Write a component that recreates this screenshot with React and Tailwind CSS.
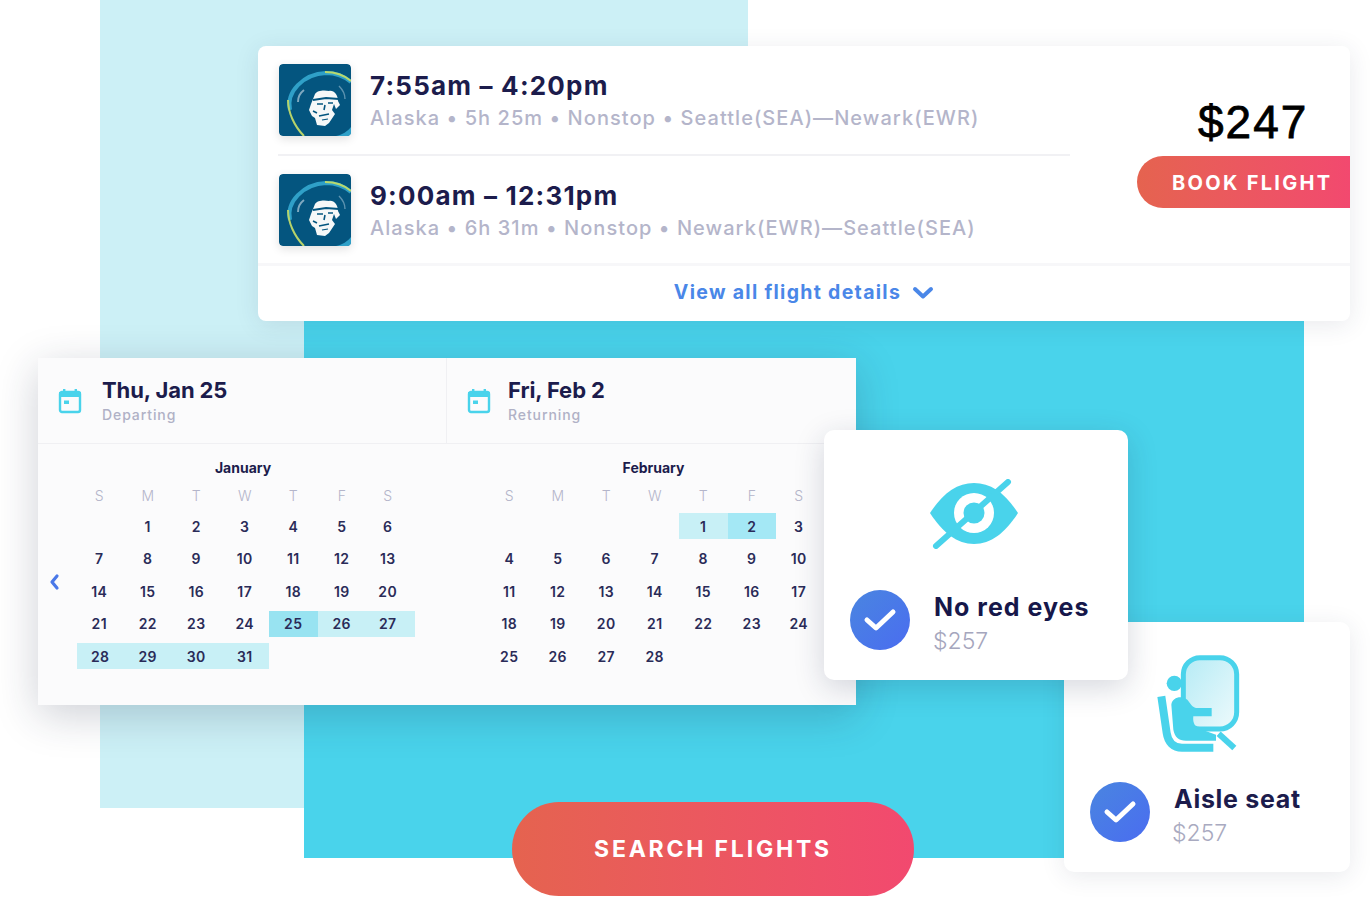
import React from "react";

const F = { fontFamily: '"Inter", "Open Sans", sans-serif' };

function AlaskaLogo() {
  return (
    <svg width="72" height="72" viewBox="0 0 72 72" className="block rounded-[4px] shadow-[0_3px_10px_rgba(0,0,0,0.12)] shrink-0">
      <rect width="72" height="72" rx="4" fill="#04557f" />
      <g className="blur-[0.5px]">
        <path d="M11 46 C7 28 24 10 47 9 C56 9 65 12 72 18" fill="none" stroke="#2fa0c8" strokeWidth="4" />
        <path d="M46 8 C56 8 65 11 72 17" fill="none" stroke="#b9d96c" strokeWidth="2" />
        <path d="M9 36 C9 48 15 62 25 72" fill="none" stroke="#b7d36a" strokeWidth="2" />
        <path d="M19 38 C19 33 21 29 25 26" fill="none" stroke="#7fa9c0" strokeWidth="2" />
        <path d="M60 22 C64 26 66 30 66 35" fill="none" stroke="#5d93b0" strokeWidth="1.4" />
        <path d="M57 72 C63 71 69 67 72 63 L72 72Z" fill="#2fa0c8" />
        <path d="M36 30 C38 26 46 26 50 27 C55 26 59 31 59 37 L61 41 L57 45 L55 40 L53 46 L56 50 L50 59 L46 62 L38 61 L36 54 L33 52 L30 46 L32 40 Z" fill="#f6f8f8" />
        <path d="M34 36 L47 34 L60 35" stroke="#04557f" strokeWidth="1.8" fill="none" />
        <path d="M38 40 L44 40 M49 39 L54 39 M46 41 L45 46 M40 52 L50 50 M34 47 L38 49" stroke="#04557f" strokeWidth="1.6" fill="none" />
        <path d="M43 56 L49 55" stroke="#04557f" strokeWidth="1.2" fill="none" />
      </g>
    </svg>
  );
}

function FlightRow({ time, sub }) {
  return (
    <div className="flex items-center gap-[19px] h-[72px]">
      <AlaskaLogo />
      <div className="flex flex-col -mt-[1px]">
        <div className="text-[26px] leading-[34px] font-bold text-[#1c1c4c] tracking-[1.2px] whitespace-nowrap">{time}</div>
        <div className="text-[20px] leading-[26px] mt-[2px] text-[#b4b5ca] tracking-[1.05px] font-medium whitespace-nowrap">{sub}</div>
      </div>
    </div>
  );
}

function CalIcon() {
  return (
    <svg width="24" height="26" viewBox="0 0 24 26" className="block shrink-0">
      <rect x="2" y="4" width="20" height="20" rx="2" fill="none" stroke="#49d3eb" strokeWidth="2.4" />
      <rect x="1" y="4" width="22" height="5" fill="#49d3eb" />
      <rect x="5" y="1" width="2.4" height="4" fill="#49d3eb" />
      <rect x="16.6" y="1" width="2.4" height="4" fill="#49d3eb" />
      <rect x="6" y="12.5" width="5" height="3.5" fill="#49d3eb" />
    </svg>
  );
}

function DateHead({ title, sub, className }) {
  return (
    <div className={"flex items-center pl-[20px] h-full " + className}>
      <CalIcon />
      <div className="flex flex-col pb-[2px]">
        <div className="text-[22px] leading-[30px] font-bold text-[#1c1c4c] tracking-[-0.1px] whitespace-nowrap">{title}</div>
        <div className="text-[14px] leading-[19px] font-medium text-[#b0b1c6] tracking-[0.9px]">{sub}</div>
      </div>
    </div>
  );
}

const WD = ["S", "M", "T", "W", "T", "F", "S"];

function Month({ name, cells, marks, nameClass, gridClass, lastCol }) {
  return (
    <div className={gridClass}>
      <div className={"text-[14px] leading-[18px] font-bold text-[#1c1c4c] text-center " + nameClass}>{name}</div>
      <div className="grid grid-cols-[repeat(7,48.5px)] mt-[8px] h-[18px] items-center text-center text-[14px] font-light text-[#b4b5ca]">
        {WD.map((d, i) => <div key={i} className={i === 6 ? lastCol : ""}>{d}</div>)}
      </div>
      <div className="grid grid-cols-[repeat(7,48.5px)] auto-rows-[26px] gap-y-[6.6px] mt-[10px]">
        {cells.map((c, i) => (
          <div key={i} className={"flex items-center justify-center text-[14px] font-semibold tracking-[0.4px] text-[#2a2b58] " + (i % 7 === 6 ? lastCol + " " : "") + (marks[c] || "")}>
            {c > 0 ? c : ""}
          </div>
        ))}
      </div>
    </div>
  );
}

function Check() {
  return (
    <div className="w-[60px] h-[60px] rounded-full shrink-0 flex items-center justify-center bg-gradient-to-br from-[#4a85e0] to-[#4a6cf0]">
      <svg width="34" height="26" viewBox="0 0 34 26">
        <path d="M4 13 L13 21 L30 5" fill="none" stroke="#fff" strokeWidth="5" strokeLinecap="round" strokeLinejoin="round" />
      </svg>
    </div>
  );
}

const L = "bg-[#c8f0f6]";
const D = "bg-[#a4e8f5]";

export default function App() {
  const jan = [0, 1, 2, 3, 4, 5, 6, 7, 8, 9, 10, 11, 12, 13, 14, 15, 16, 17, 18, 19, 20, 21, 22, 23, 24, 25, 26, 27, 28, 29, 30, 31];
  const feb = [0, 0, 0, 0, 1, 2, 3, 4, 5, 6, 7, 8, 9, 10, 11, 12, 13, 14, 15, 16, 17, 18, 19, 20, 21, 22, 23, 24, 25, 26, 27, 28];
  const janMarks = { 25: "bg-[#98e3f1]", 26: L, 27: L, 28: L + " ml-[2px]", 29: L, 30: L, 31: L };
  const febMarks = { 1: L, 2: D };
  return (
    <div className="relative w-[1370px] h-[898px] overflow-hidden bg-white" style={F}>
      <div className="absolute left-[100px] top-0 w-[648px] h-[808px] bg-[#ccf0f6]" />
      <div className="absolute left-[304px] top-[200px] w-[1000px] h-[658px] bg-[#49d3eb]" />

      {/* flight card */}
      <div className="absolute left-[258px] top-[46px] w-[1092px] h-[275px] bg-white rounded-[8px] shadow-[0_4px_24px_rgba(40,50,80,0.1)] flex flex-col">
        <div className="flex h-[217px]">
          <div className="w-[791px] ml-[21px] pt-[18px] shrink-0 flex flex-col">
            <FlightRow time="7:55am – 4:20pm" sub="Alaska • 5h 25m • Nonstop • Seattle(SEA)—Newark(EWR)" />
            <div className="h-[2px] bg-[#f1f1f4] mt-[18px] mb-[18px] -ml-[1px]" />
            <FlightRow time="9:00am – 12:31pm" sub="Alaska • 6h 31m • Nonstop • Newark(EWR)—Seattle(SEA)" />
          </div>
          <div className="flex-1 flex flex-col items-end">
            <div className="mt-[47px] w-[152px] text-[46px] leading-[58px] text-black tracking-[2px] [-webkit-text-stroke:0.8px_#000]" style={{ fontFamily: '"Liberation Sans", sans-serif' }}>$247</div>
            <div className="mt-[5px] w-[213px] h-[52px] pt-[1px] rounded-l-full bg-gradient-to-r from-[#e5634f] to-[#f2496f] flex items-center pl-[35px] text-white text-[20px] font-bold tracking-[2.3px] whitespace-nowrap">BOOK FLIGHT</div>
          </div>
        </div>
        <div className="h-[3px] bg-[#f7f7f9]" />
        <div className="flex-1 flex items-center justify-center gap-[11px] pb-[2px]">
          <span className="text-[19.5px] font-bold text-[#4a87e8] tracking-[1.3px]">View all flight details</span>
          <svg width="22" height="14" viewBox="0 0 22 14"><path d="M3 3 L11 10.5 L19 3" fill="none" stroke="#4a87e8" strokeWidth="4" strokeLinecap="round" strokeLinejoin="round" /></svg>
        </div>
      </div>

      {/* calendar */}
      <div className="absolute left-[38px] top-[358px] w-[818px] h-[347px] bg-[#fbfbfc] shadow-[0_10px_40px_rgba(30,40,70,0.22)] flex flex-col">
        <div className="flex h-[86px] border-b border-[#f0f0f3] shrink-0">
          <DateHead title="Thu, Jan 25" sub="Departing" className="w-[409px] border-r border-[#f0f0f3] gap-[20px]" />
          <DateHead title="Fri, Feb 2" sub="Returning" className="flex-1 gap-[17px]" />
        </div>
        <div className="relative flex-1 flex pl-[37px] pt-[15px]">
          <Month name="January" cells={jan} marks={janMarks} nameClass="pr-[4px]" gridClass="w-[340px] shrink-0" lastCol="pr-[5px]" />
          <Month name="February" cells={feb} marks={febMarks} nameClass="pr-[3px]" gridClass="w-[340px] shrink-0 ml-[70px]" lastCol="pr-[3px]" />
          <svg width="12" height="18" viewBox="0 0 12 18" className="absolute left-[10px] top-[129px]"><path d="M9 3 L4 9 L9 15" fill="none" stroke="#4a78e8" strokeWidth="3.2" strokeLinecap="round" strokeLinejoin="round" /></svg>
        </div>
      </div>

      {/* search */}
      <div className="absolute left-[512px] top-[802px] w-[402px] h-[94px] rounded-full bg-gradient-to-r from-[#e5634f] to-[#f2496f] flex items-center justify-center text-white text-[23px] font-bold tracking-[2.8px]">SEARCH FLIGHTS</div>

      {/* aisle card */}
      <div className="absolute left-[1064px] top-[622px] w-[286px] h-[250px] bg-white rounded-[10px] shadow-[0_4px_24px_rgba(40,50,80,0.1)] flex flex-col pl-[26px]">
        <svg width="85" height="100" viewBox="290 100 255 300" className="block ml-[66px] mt-[31px]">
          <defs>
            <linearGradient id="win" x1="0" y1="0" x2="1" y2="1">
              <stop offset="0" stopColor="#b5ebf5" />
              <stop offset="1" stopColor="#eefafc" />
            </linearGradient>
          </defs>
          <rect x="372" y="114" width="160" height="214" rx="50" fill="url(#win)" stroke="#49d3eb" strokeWidth="15" />
          <circle cx="345" cy="191" r="23" fill="#49d3eb" />
          <path d="M336 255 C338 232 368 226 384 240 C392 250 398 262 410 265 L457 265 L457 290 L402 290 C400 305 404 318 416 326 L470 345 L470 363 L380 363 C358 363 346 352 342 330 Z" fill="#49d3eb" />
          <path d="M306 230 L322 340 C326 368 342 384 368 384 L462 384" fill="none" stroke="#49d3eb" strokeWidth="24" />
          <path d="M478 342 L525 385" fill="none" stroke="#49d3eb" strokeWidth="18" />
        </svg>
        <div className="flex items-start gap-[24px] mt-[29px]">
          <Check />
          <div className="flex flex-col">
            <div className="text-[25px] leading-[34px] font-bold text-[#1c1c4c] tracking-[0.7px] whitespace-nowrap">Aisle seat</div>
            <div className="text-[23px] leading-[34px] font-light text-[#a9aac0] -ml-[2px]">$257</div>
          </div>
        </div>
      </div>

      {/* eye card */}
      <div className="absolute left-[824px] top-[430px] w-[304px] h-[250px] bg-white rounded-[10px] shadow-[0_8px_30px_rgba(30,40,70,0.18)] flex flex-col pl-[26px]">
        <svg width="90" height="70" viewBox="0 0 90 70" className="block ml-[79px] mt-[49px]">
          <path d="M1 34 C14 14 28 4 45 4 C62 4 76 14 89 34 C76 54 62 65 45 65 C28 65 14 54 1 34Z" fill="#49d3eb" />
          <circle cx="45" cy="34" r="20" fill="#fff" />
          <circle cx="45" cy="34" r="10.5" fill="#49d3eb" />
          <path d="M7 67 L79 3" stroke="#49d3eb" strokeWidth="6" strokeLinecap="round" />
        </svg>
        <div className="flex items-start gap-[24px] mt-[41px]">
          <Check />
          <div className="flex flex-col">
            <div className="text-[25px] leading-[34px] font-bold text-[#16174a] tracking-[1px] whitespace-nowrap">No red eyes</div>
            <div className="text-[23px] leading-[34px] font-light text-[#a5a6bd] -ml-[1px]">$257</div>
          </div>
        </div>
      </div>
    </div>
  );
}
